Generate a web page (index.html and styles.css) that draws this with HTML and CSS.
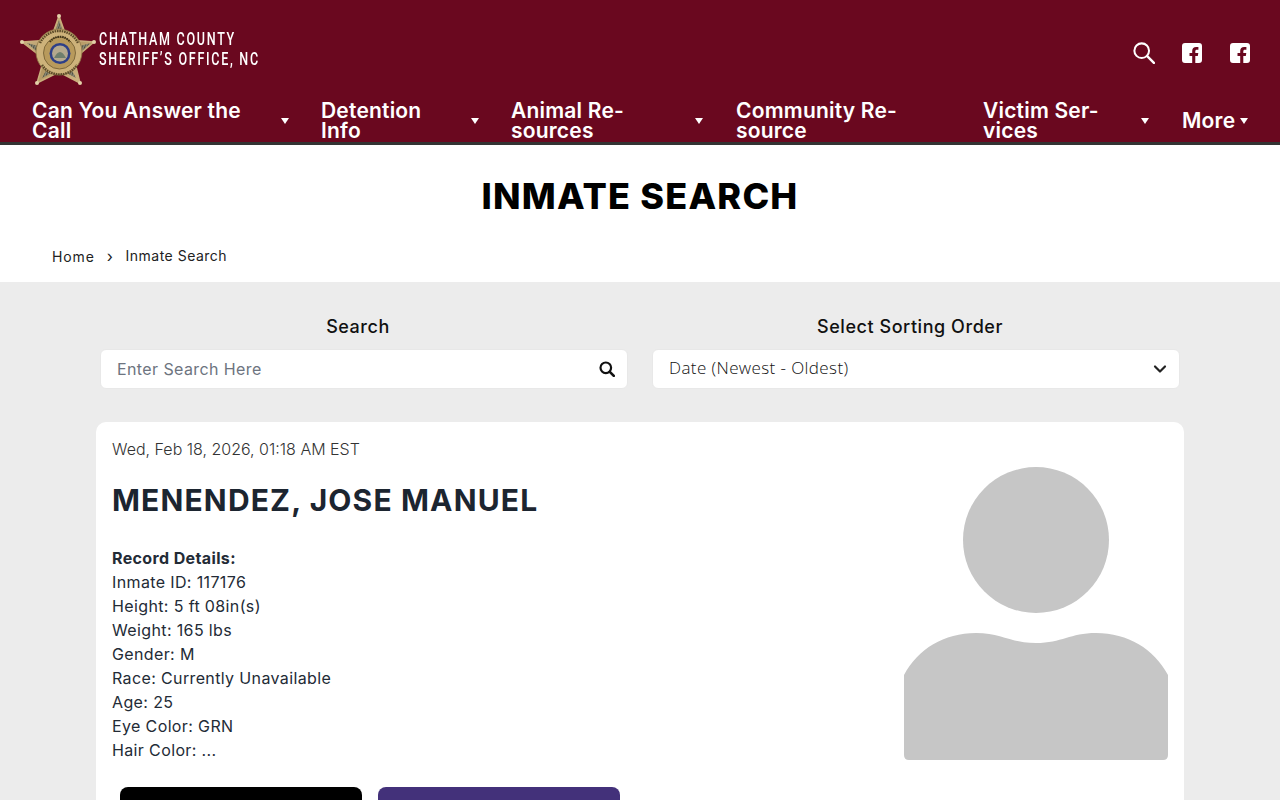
FILE: index.html
```html
<!DOCTYPE html>
<html lang="en">
<head>
<meta charset="utf-8">
<title>Inmate Search</title>
<link rel="stylesheet" href="styles.css">
</head>
<body>
<header class="site-header">
  <div class="top-row">
    <a class="brand" href="#">
      <svg class="badge" viewBox="0 0 80 76" width="80" height="76" aria-hidden="true">
        <defs>
          <linearGradient id="gold" x1="0" y1="0" x2="1" y2="1">
            <stop offset="0" stop-color="#dcc59a"/><stop offset=".5" stop-color="#b0935e"/><stop offset="1" stop-color="#d8bf8e"/>
          </linearGradient>
          <pattern id="stripes" width="2.400" height="2.400" patternUnits="userSpaceOnUse" patternTransform="rotate(20)">
            <rect width="2.400" height="2.400" fill="#8d8b76"/><rect width="1" height="2.400" fill="#4f4f40"/>
          </pattern>
        </defs>
        <path d="M39 3 L47.500 27 L74 29 L54 46 L60 70 L39 59 L17 70 L24 46 L2 29 L30.500 27 Z" fill="url(#gold)" stroke="#c9ae7c" stroke-width="1.500" stroke-linejoin="round"/>
        <path d="M7 30 L22 34 L22 43 Z M71 30 L56 34 L56 43 Z M22 65 L29 52 L35 58 Z M56 65 L49 52 L43 58 Z M39 7 L35 19 L43 19 Z" fill="url(#stripes)"/>
        <circle cx="39" cy="3" r="2" fill="#e3d0a8"/><circle cx="2" cy="29" r="2" fill="#e3d0a8"/><circle cx="74" cy="29" r="2" fill="#e3d0a8"/><circle cx="17" cy="70" r="2" fill="#e3d0a8"/><circle cx="60" cy="70" r="2" fill="#e3d0a8"/>
        <circle cx="39" cy="39" r="23" fill="#cdb27a" stroke="#8b7444" stroke-width=".8"/>
        <circle cx="39.500" cy="40" r="16" fill="#b89a5c" stroke="#6f5a30" stroke-width=".8"/>
        <circle cx="40" cy="40.500" r="10.500" fill="#2d3f88"/>
        <circle cx="40" cy="40.500" r="8" fill="#b4a98e"/>
        <path d="M34 45 Q40 33 46 45 Z" fill="#6f7f6d"/>
        <path d="M20 30 A21 21 0 0 1 58 30" fill="none" stroke="#5b4a28" stroke-width="2.400" stroke-dasharray="1.600 .8"/>
        <path d="M22 52 A21 21 0 0 0 57 52" fill="none" stroke="#5b4a28" stroke-width="2.400" stroke-dasharray="1.600 .8"/>
        <path d="M30 29 A12 12 0 0 1 50 29" fill="none" stroke="#3d3218" stroke-width="2" stroke-dasharray="1.500 .8"/>
      </svg>
      <span class="brand-text">CHATHAM COUNTY<br>SHERIFF’S OFFICE, NC</span>
    </a>
    <div class="top-icons">
      <svg class="icon icon-search" viewBox="0 0 24 24" width="22" height="22" aria-hidden="true"><circle cx="9.500" cy="9.500" r="8" fill="none" stroke="#fff" stroke-width="2.200"/><path d="M15.500 15.500 L22.800 22.800" stroke="#fff" stroke-width="2.600" stroke-linecap="round"/></svg>
      <svg class="icon" viewBox="0 0 20 20" width="20" height="20" aria-hidden="true"><path fill="#fff" fill-rule="evenodd" d="M3 0h14a3 3 0 0 1 3 3v14a3 3 0 0 1-3 3h-3.700v-7h2.500l.5-3h-3V8.200c0-.9.400-1.500 1.600-1.500h1.500V4.100c-.5-.1-1.400-.2-2.300-.2-2.400 0-3.900 1.400-3.900 4V10H7.500v3h2.700v7H3a3 3 0 0 1-3-3V3a3 3 0 0 1 3-3z"/></svg>
      <svg class="icon" viewBox="0 0 20 20" width="20" height="20" aria-hidden="true"><path fill="#fff" fill-rule="evenodd" d="M3 0h14a3 3 0 0 1 3 3v14a3 3 0 0 1-3 3h-3.700v-7h2.500l.5-3h-3V8.200c0-.9.400-1.500 1.600-1.500h1.500V4.100c-.5-.1-1.400-.2-2.300-.2-2.400 0-3.900 1.400-3.900 4V10H7.500v3h2.700v7H3a3 3 0 0 1-3-3V3a3 3 0 0 1 3-3z"/></svg>
    </div>
  </div>
  <nav class="main-nav">
    <a class="nav-item w1" href="#"><span>Can You Answer the<br>Call</span><i class="caret"></i></a>
    <a class="nav-item w2" href="#"><span>Detention<br>Info</span><i class="caret"></i></a>
    <a class="nav-item w3" href="#"><span>Animal Re-<br>sources</span><i class="caret"></i></a>
    <a class="nav-item w4" href="#"><span>Community Re-<br>source</span></a>
    <a class="nav-item w5" href="#"><span>Victim Ser-<br>vices</span><i class="caret"></i></a>
    <a class="nav-item w6" href="#"><span>More</span><i class="caret"></i></a>
  </nav>
</header>

<section class="title-band">
  <h1>INMATE SEARCH</h1>
  <div class="crumbs"><a class="home" href="#">Home</a><span class="sep">›</span><span class="here">Inmate Search</span></div>
</section>

<main class="content">
  <div class="filters">
    <div class="filter">
      <label class="filter-label">Search</label>
      <div class="field">
        <span class="placeholder">Enter Search Here</span>
        <svg viewBox="0 0 16 16" width="16" height="16" aria-hidden="true"><circle cx="6.800" cy="6.800" r="5.300" fill="none" stroke="#111" stroke-width="2.200"/><path d="M10.800 10.800 L14.800 14.800" stroke="#111" stroke-width="2.600" stroke-linecap="round"/></svg>
      </div>
    </div>
    <div class="filter">
      <label class="filter-label">Select Sorting Order</label>
      <div class="field">
        <span class="select-value">Date (Newest - Oldest)</span>
        <svg viewBox="0 0 14 10" width="14" height="10" aria-hidden="true"><path d="M2 2.500 L7 7.500 L12 2.500" fill="none" stroke="#222" stroke-width="2.200" stroke-linecap="round" stroke-linejoin="round"/></svg>
      </div>
    </div>
  </div>

  <article class="card">
    <div class="card-body">
      <div class="info">
        <p class="timestamp">Wed, Feb 18, 2026, 01:18 AM EST</p>
        <h2>MENENDEZ, JOSE MANUEL</h2>
        <div class="details">
          <strong>Record Details:</strong><br>
          Inmate ID: 117176<br>
          Height: 5 ft 08in(s)<br>
          Weight: 165 lbs<br>
          Gender: M<br>
          Race: Currently Unavailable<br>
          Age: 25<br>
          Eye Color: GRN<br>
          Hair Color: ...
        </div>
      </div>
      <svg class="avatar" viewBox="0 0 264 294" width="264" height="294" aria-hidden="true">
        <circle cx="132" cy="73" r="73" fill="#c6c6c6"/>
        <path d="M0 208 C14 182 40 166 72 166 C98 166 106 176 132 176 C158 176 166 166 192 166 C224 166 250 182 264 208 L264 288 Q264 293 259 293 L5 293 Q0 293 0 288 Z" fill="#c6c6c6"/>
      </svg>
    </div>
    <div class="actions">
      <a class="btn btn-black" href="#"></a>
      <a class="btn btn-purple" href="#"></a>
    </div>
  </article>
</main>
</body>
</html>
```
FILE: styles.css
```css
* { box-sizing: border-box; }
html, body { margin: 0; padding: 0; }
body {
  font-family: "Inter", "Liberation Sans", sans-serif;
  color: #1c2530;
  background: #ececec;
  overflow-x: hidden;
}
a { color: inherit; text-decoration: none; }

.site-header {
  background: #6a081f;
  height: 145px;
  border-bottom: 3px solid #333;
  color: #fff;
}
.top-row {
  height: 98px;
  display: flex;
  justify-content: space-between;
  align-items: flex-start;
  padding: 0 30px 0 20px;
}
.brand { display: flex; align-items: flex-start; padding-top: 13px; }
.badge { flex: none; filter: blur(.3px); }
.brand-text {
  display: block;
  font-family: "Roboto", "Liberation Sans", sans-serif;
  font-size: 19px;
  font-weight: 500;
  line-height: 20px;
  letter-spacing: 2.600px;
  margin: 16px 0 0 -1px;
  white-space: nowrap;
  transform: scaleX(.66);
  transform-origin: left center;
}
.top-icons { display: flex; align-items: center; gap: 28px; padding-top: 42px; }
.icon { display: block; }
.icon-search { margin-right: -1px; }
.main-nav { display: flex; padding-left: 20px; }
.nav-item {
  display: flex;
  align-items: center;
  justify-content: space-between;
  height: 46px;
  padding: 0 8px 0 12px;
  font-size: 21px;
  font-weight: 600;
  line-height: 20px;
  letter-spacing: .2px;
  white-space: nowrap;
}
.w1 { width: 277px; margin-right: 12px; }
.w2 { width: 178px; margin-right: 12px; }
.w3 { width: 212px; margin-right: 13px; }
.w4 { width: 247px; }
.w5 { width: 186px; margin-right: 13px; }
.w6 { width: 86px; }
.caret {
  width: 0; height: 0;
  border-left: 4px solid transparent;
  border-right: 4px solid transparent;
  border-top: 6px solid #fff;
  flex: none;
}

.title-band { background: #fff; height: 137px; padding-top: 29px; }
.title-band h1 {
  margin: 0;
  text-align: center;
  font-size: 36px;
  font-weight: 800;
  line-height: 44px;
  letter-spacing: 1.200px;
  color: #000;
}
.crumbs {
  display: flex;
  align-items: flex-start;
  margin-top: 28px;
  padding-left: 52px;
  font-size: 14px;
  line-height: 20px;
  letter-spacing: .5px;
  color: #222;
}
.home { letter-spacing: .9px; padding-top: 1px; }
.sep { margin: 0 12px 0 12px; font-size: 16px; }

.content { padding: 32px 96px 0 88px; }
.filters { display: flex; gap: 12px; width: 1092px; }
.filter { width: 540px; }
.filter-label {
  display: block;
  text-align: center;
  font-size: 18px;
  font-weight: 500;
  line-height: 26px;
  letter-spacing: .55px;
  color: #111;
}
.field {
  margin: 9px 0 0 12px;
  height: 40px;
  background: #fff;
  border: 1px solid #e8e8e8;
  border-radius: 6px;
  display: flex;
  align-items: center;
  justify-content: space-between;
  padding: 0 12px 0 16px;
}
.placeholder { font-size: 16px; letter-spacing: .4px; color: #6d7480; }
.select-value {
  font-family: "Open Sans", sans-serif;
  font-size: 17px;
  font-weight: 300;
  letter-spacing: .4px;
  color: #111;
  margin-bottom: 4px;
}

.card {
  margin: 33px 0 0 8px;
  width: 1088px;
  background: #fff;
  border-radius: 10px;
  padding: 15px 16px 16px;
}
.card-body { display: flex; justify-content: space-between; align-items: flex-start; }
.timestamp { margin: 0; font-size: 16px; font-weight: 300; line-height: 24px; color: #333; }
.info h2 { margin: 19px 0 0; font-size: 30px; font-weight: 700; line-height: 40px; letter-spacing: 1.150px; color: #1c2530; }
.details { margin-top: 26px; font-size: 16px; line-height: 24px; letter-spacing: .37px; color: #232b36; font-weight: 400; }
.details strong { font-weight: 700; }
.avatar { flex: none; margin-top: 30px; filter: blur(.4px); }
.actions { display: flex; gap: 16px; padding-left: 8px; margin-top: 25px; }
.btn { display: block; width: 242px; height: 44px; border-radius: 8px 8px 0 0; }
.btn-black { background: #000; }
.btn-purple { background: #43317a; }
```
